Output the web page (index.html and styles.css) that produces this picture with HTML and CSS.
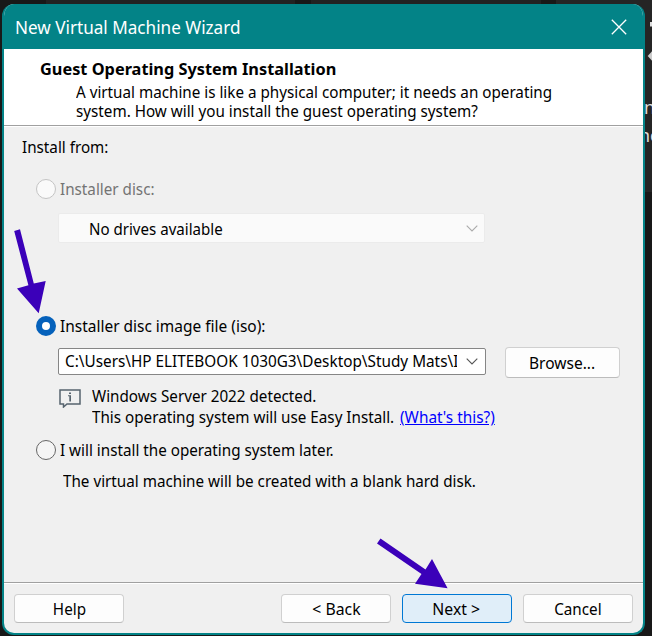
FILE: index.html
```html
<!DOCTYPE html>
<html lang="en">
<head>
<meta charset="utf-8">
<title>New Virtual Machine Wizard</title>
<link rel="stylesheet" href="styles.css">
</head>
<body>
<div class="desktop">
  <div class="tab tab-left"></div><div class="tab tab-right"></div>
  <div class="backdrop-panel"></div>
  <svg class="backdrop-marks" width="7" height="70" viewBox="0 0 7 70"><path d="M5 22h2v4.5H5z" fill="#ddd"/><path d="M2.7 56L7 51.2v9.6z" fill="#ccc"/></svg>
  <span class="backdrop-text first">n</span>
  <span class="backdrop-text second">ne</span>
</div>
<main class="window">
  <header class="titlebar">
    <span class="title">New Virtual Machine Wizard</span>
    <svg class="close" width="16" height="16" viewBox="0 0 16 16"><path d="M.8.8l14.4 14.4M15.2.8L.8 15.2" stroke="#fff" stroke-width="1.3" fill="none"/></svg>
  </header>
  <section class="intro">
    <h1><span class="t-heading">Guest Operating System Installation</span></h1>
    <p><span class="intro-one">A virtual machine is like a physical computer; it needs an operating</span><br><span class="intro-two">system. How will you install the guest operating system?</span></p>
  </section>
  <section class="content">
    <div class="from"><span>Install from:</span></div>
    <label class="option disabled"><i class="radio"></i><span class="t-disc">Installer disc:</span></label>
    <div class="select drives"><span class="t-drives">No drives available</span><svg class="chevron" width="12" height="7" viewBox="0 0 12 7"><path d="M.7.7L6 6 11.3.7"/></svg></div>
    <label class="option image"><i class="radio checked"></i><span class="t-image">Installer disc image file (iso):</span></label>
    <div class="file-row">
      <div class="select path"><div class="path-clip"><span class="t-path">C:\Users\HP ELITEBOOK 1030G3\Desktop\Study Mats\I</span></div><svg class="chevron" width="12" height="7" viewBox="0 0 12 7"><path d="M.7.7L6 6 11.3.7"/></svg></div>
      <button class="button browse"><span class="t-browse">Browse...</span></button>
    </div>
    <div class="notice">
      <svg width="22" height="19" viewBox="0 0 22 19"><path d="M1 1h20v14H8l-3.5 3V15H1z" fill="none" stroke="#56636e" stroke-width="1.5"/><path d="M10 3.5h2v1.5h-2zM9 6.2h3V12.5h-1.7V7.3H9z" fill="#56636e"/></svg>
      <div class="notice-text"><span class="t-detected">Windows Server 2022 detected.</span><br><span class="t-easy">This operating system will use Easy Install.</span><a class="t-what" href="#">(What's this?)</a></div>
    </div>
    <label class="option later"><i class="radio"></i><span class="t-later">I will install the operating system later.</span></label>
    <div class="blank"><span>The virtual machine will be created with a blank hard disk.</span></div>
  </section>
  <footer class="actions">
    <button class="button help"><span class="t-help">Help</span></button>
    <button class="button"><span class="t-back">&lt; Back</span></button>
    <button class="button primary"><span class="t-next">Next &gt;</span></button>
    <button class="button"><span class="t-cancel">Cancel</span></button>
  </footer>
</main>
<svg class="arrows" width="652" height="636" viewBox="0 0 652 636" fill="#3b00b9">
  <path d="M14.2 231L20 229.3 33.8 283.5 45.7 281 38.7 313.2 17 288.4 28.4 285.3z"/>
  <path d="M377 543.5L380.5 538.5 425.5 569.5 432 559 447.6 588.2 415 583.8 421.5 574z"/>
</svg>
</body>
</html>
```

FILE: styles.css
```css
* { box-sizing: border-box; }
html, body { margin: 0; width: 652px; height: 636px; overflow: hidden; }
body { position: relative; background: #181818; font: 16px/20px "Noto Sans", sans-serif; color: #000; }
.desktop { position: absolute; inset: 0; overflow: hidden; background: #181818; }
.tab { position: absolute; top: 0; height: 6px; background: #222; }
.tab-left { left: 46px; width: 249px; }
.tab-right { left: 311px; width: 230px; }
.backdrop-panel { position: absolute; left: 556px; top: 0; width: 96px; height: 192px; background: #252525; }
.backdrop-marks { position: absolute; left: 645px; top: 0; }
.backdrop-text { position: absolute; left: 644px; color: #ddd; font-size: 18px; }
.first { top: 97px; }
.second { top: 125px; left: 639px; }
.window { position: absolute; left: 2px; top: 4px; width: 643px; height: 631px; border: 2px solid #038387; border-top: 0; border-radius: 12px; background: #f0f0f0; overflow: hidden; display: flex; flex-direction: column; }
/* Narrow the interface face while keeping its height. */
.window span, .window a { display: inline-block; vertical-align: top; white-space: nowrap; transform: scaleX(.951); transform-origin: left; }
.titlebar { flex: none; height: 45px; background: #038387; display: flex; align-items: center; justify-content: space-between; padding: 0 17px 0 11px; }
.title { color: #fff; font-size: 18px; line-height: 24px; }
.close { position: relative; left: .5px; }
.intro { flex: none; height: 78px; background: #fff; border-bottom: 1px solid #fff; box-shadow: inset 0 -1px #a0a0a0; padding-top: 10px; }
h1 { margin: 0 0 4px 36px; font-size: 16px; line-height: 20px; }
.window .t-heading { transform: scaleX(1.02); }
.intro p { margin: 0 0 0 72px; line-height: 19px; }
.content { flex: none; height: 455px; padding-top: 10px; display: flex; flex-direction: column; }
.from { height: 20px; margin-left: 18px; }
.option { display: flex; align-items: center; gap: 4px; height: 22px; margin-left: 32px; }
.disabled { margin-top: 21px; color: #747474; }
.radio { width: 20px; height: 20px; border: 1px solid #666; border-radius: 50%; background: #f5f5f5; }
.disabled .radio { border-color: #c4c4c4; background: #fafafa; }
.radio.checked { border: 6px solid #0561bb; background: #fff; }
.window .t-image { transform: scaleX(.966); }
.select { display: flex; align-items: center; justify-content: space-between; }
.chevron { fill: none; stroke: #555; stroke-width: 1.1; }
.drives { width: 427px; height: 30px; margin: 13px 0 0 54px; padding: 1px 6px 0 30px; background: #fafafa; border: 1px solid #ebebeb; border-radius: 2px; }
.window .t-drives { transform: scaleX(.942); }
.drives .chevron { stroke: #aaa; }
.image { margin-top: 72px; }
.file-row { display: flex; gap: 19px; margin: 10px 0 0 54px; }
.path { width: 428px; height: 27px; margin-top: 1px; padding: 0 7px 0 6px; background: #fff; border: 1px solid #868686; border-radius: 2px; }
.path-clip { width: 392px; height: 21px; margin-top: -1px; overflow: hidden; }
.window .t-path { transform: scaleX(.957); }
.button { width: 110px; height: 29px; padding: 0; font: inherit; color: #000; background: #fdfdfd; border: 1px solid #d0d0d0; border-bottom-color: #bcbcbc; border-radius: 4px; }
.window .button span { transform-origin: center; }
.window .t-back, .window .t-next { transform: scaleX(.985); }
.window .t-next { margin-left: -2px; }
.window .t-browse { transform: scaleX(.97); margin-left: -1px; }
.browse { width: 115px; height: 31px; }
.notice { display: flex; gap: 11px; margin: 8px 0 0 55px; }
.notice svg { margin-top: 3px; }
.notice-text { line-height: 21px; }
.window .t-what { margin-left: -10px; color: #00f; text-underline-offset: 1px; transform: scaleX(.96); }
.later { margin-top: 11px; }
.blank { margin: 10px 0 0 59px; }
.actions { flex: 1; display: flex; gap: 11px; padding: 11px 10px 0; border-top: 1px solid #a0a0a0; box-shadow: inset 0 1px #fff; }
.help { margin-right: auto; }
.primary { background: #e0eef9; border-color: #0078d4; }
.arrows { position: absolute; inset: 0; pointer-events: none; }
```
